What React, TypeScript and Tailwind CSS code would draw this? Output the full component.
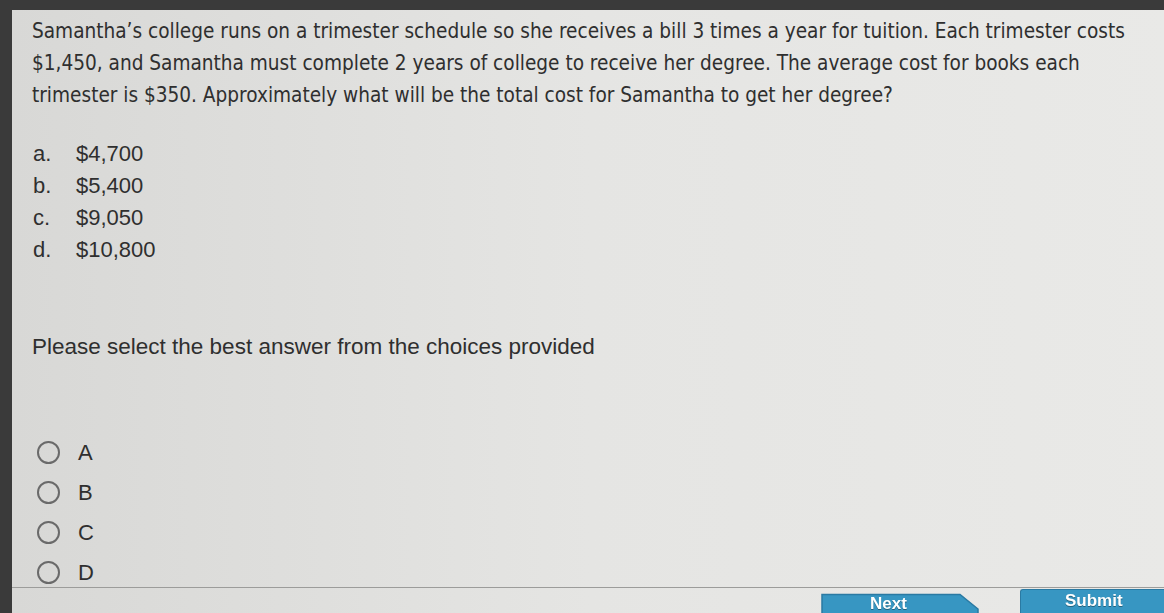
import React, { useState } from "react";

const choices = [
  { key: "a.", value: "$4,700" },
  { key: "b.", value: "$5,400" },
  { key: "c.", value: "$9,050" },
  { key: "d.", value: "$10,800" },
];

const options = ["A", "B", "C", "D"];

export default function App() {
  const [selected, setSelected] = useState<string | null>(null);

  return (
    <div className="w-[1164px] h-[613px] overflow-hidden bg-[#3a3a3a] pt-[10px] pl-[12px] font-['Liberation_Sans',Arial,sans-serif]">
      <div className="relative h-full flex flex-col bg-gradient-to-r from-[#d8d8d6] via-[#e5e5e3] to-[#e9e9e7] text-[#2f2f2f]">
        <div className="pl-[20px] pt-[5px] font-['DejaVu_Sans_Condensed','DejaVu_Sans',sans-serif] text-[20.6px] leading-[32px] whitespace-nowrap">
          <p>
            Samantha’s college runs on a trimester schedule so she receives a bill 3 times a year for tuition. Each trimester costs
          </p>
          <p>
            $1,450, and Samantha must complete 2 years of college to receive her degree. The average cost for books each
          </p>
          <p>
            trimester is $350. Approximately what will be the total cost for Samantha to get her degree?
          </p>
        </div>

        <ul className="pl-[21px] pt-[27px] text-[22px] leading-[32px]">
          {choices.map((c) => (
            <li key={c.key} className="flex">
              <span className="w-[43px]">{c.key}</span>
              <span>{c.value}</span>
            </li>
          ))}
        </ul>

        <p className="pl-[20px] pt-[67px] text-[22.5px] leading-[28px]">
          Please select the best answer from the choices provided
        </p>

        <div className="pl-[25px] pt-[80px] flex flex-col gap-[17px]">
          {options.map((o) => (
            <button
              key={o}
              onClick={() => setSelected(o)}
              className="flex items-center gap-[18px] text-[22px] leading-[23px]"
            >
              <span className="w-[23px] h-[23px] rounded-full border-2 border-[#6a6a6a] flex items-center justify-center">
                {selected === o && <span className="w-[11px] h-[11px] rounded-full bg-[#4a4a4a]" />}
              </span>
              <span>{o}</span>
            </button>
          ))}
        </div>

        <div className="mt-[3px] border-t border-[#9c9c9a]" />

        <div className="flex-1 flex justify-end items-end gap-[40px]">
          <button className="relative w-[160px] h-[20px] text-white text-[17px] font-bold">
            <svg className="absolute top-0 left-0" width="160" height="30" viewBox="0 0 160 30">
              <path d="M2 1.5 H140 L158 16 L158 30 H2 Z" fill="#3796c2" stroke="#2a7aa3" strokeWidth="1.5" />
            </svg>
            <span className="absolute left-[50px] top-[2px] leading-[18px] drop-shadow-[0_1px_0_rgba(0,0,0,0.35)]">Next</span>
          </button>
          <button className="relative w-[144px] h-[24px] bg-[#3796c2] border-t border-l border-[#2a7aa3] rounded-tl-[3px] text-white text-[17px] font-bold">
            <span className="absolute left-[44px] top-[1px] leading-[20px] drop-shadow-[0_1px_0_rgba(0,0,0,0.35)]">Submit</span>
          </button>
        </div>
      </div>
    </div>
  );
}
